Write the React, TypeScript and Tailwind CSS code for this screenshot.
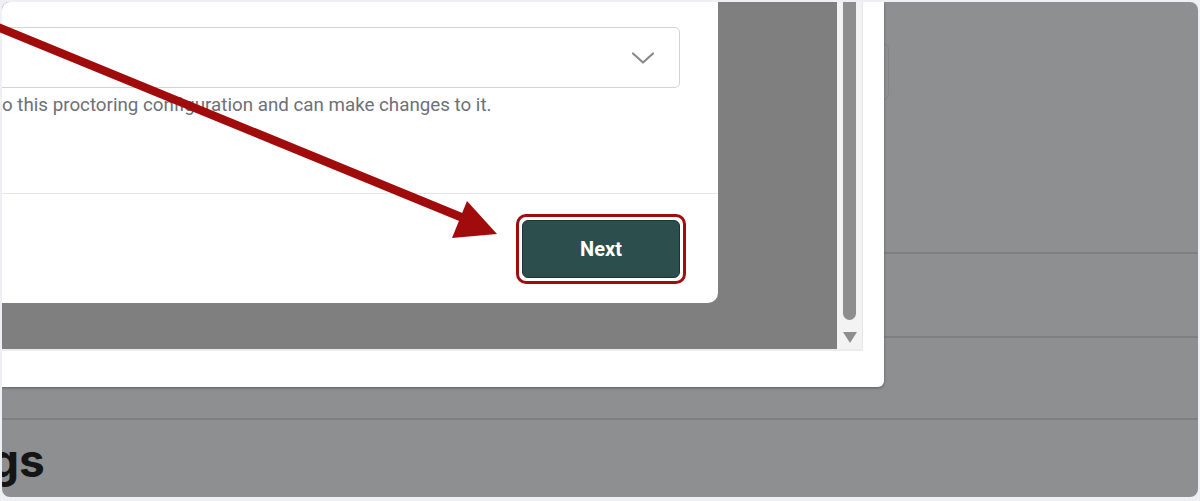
import React from 'react';

export default function App() {
  return (
    <div className="relative w-[1200px] h-[501px] bg-[#eef0f4] p-[2px] pb-[4px] font-['Roboto',sans-serif]">
      <div className="relative h-full overflow-hidden rounded-[8px] bg-[#8e8f91]">
        {/* page behind the overlay */}
        <div className="flex flex-col">
          <div className="h-[250px] pt-[41px]">
            <div className="ml-[780px] h-[57px] w-[107px] rounded-md border border-[#838486]" />
          </div>
          <div className="h-[2px] bg-[#7e7f81]" />
          <div className="h-[82px]" />
          <div className="h-[2px] bg-[#7e7f81]" />
          <div className="h-[80px]" />
          <div className="h-[2px] bg-[#7e7f81]" />
          <h2 className="mt-[17px] -ml-[12px] text-[46px] leading-[46px] font-bold text-[#151515] font-['Inter',sans-serif]">
            gs
          </h2>
        </div>

        {/* modal */}
        <div className="absolute left-0 top-0 h-[385px] w-[882px] rounded-br-[6px] bg-white shadow-[0_1px_3px_rgba(0,0,0,0.35)]">
          <div className="flex h-[349px] w-[861px] border-b-2 border-[#ececec]">
            <div className="h-full w-[835px] bg-[#7f7f7f]">
              <div className="flex h-[301px] w-[716px] flex-col overflow-hidden rounded-br-[10px] bg-white">
                <div className="h-[191px] pt-[25px] pr-[38px]">
                  <div className="-ml-4 flex h-[61px] items-center justify-end rounded-[5px] border border-[#d3d3d3] pr-[25px]">
                    <svg width="22" height="12" viewBox="0 0 22 12" fill="none">
                      <path d="M1 1.5 L11 10.5 L21 1.5" stroke="#8a8a8a" strokeWidth="2.2" strokeLinecap="round" strokeLinejoin="round" />
                    </svg>
                  </div>
                  <p className="mt-[5px] text-[18.75px] leading-6 text-[#6d7077]">
                    o this proctoring configuration and can make changes to it.
                  </p>
                </div>
                <div className="flex flex-1 justify-end border-t border-[#e4e6ea] pt-[20px] pr-[32px]">
                  <div className="h-fit rounded-[10px] border-[3px] border-[#a00d0d] p-[3px]">
                    <button className="flex h-[58px] w-[158px] items-center justify-center rounded-[6px] border border-[#1b3533] bg-[#2c4e4c] text-[20px] font-bold text-white">
                      Next
                    </button>
                  </div>
                </div>
              </div>
            </div>
            <div className="flex h-full w-[26px] flex-col items-center bg-[#f3f3f3] border-r border-[#e6e6e6]">
              <div className="h-[318px] w-[13px] rounded-b-full bg-[#8e8e8e]" />
              <svg className="mt-[12px]" width="14" height="11" viewBox="0 0 14 11">
                <path d="M0 0 H14 L7 11 Z" fill="#8e8e8e" />
              </svg>
            </div>
          </div>
        </div>
      </div>

      {/* annotation arrow */}
      <svg className="pointer-events-none absolute left-0 top-0" width="1200" height="501" viewBox="0 0 1200 501">
        <line x1="-20" y1="19.8" x2="462" y2="217.5" stroke="#a00b0b" strokeWidth="8.5" />
        <polygon points="497,234 467,201 452,238" fill="#a00b0b" />
      </svg>
    </div>
  );
}
